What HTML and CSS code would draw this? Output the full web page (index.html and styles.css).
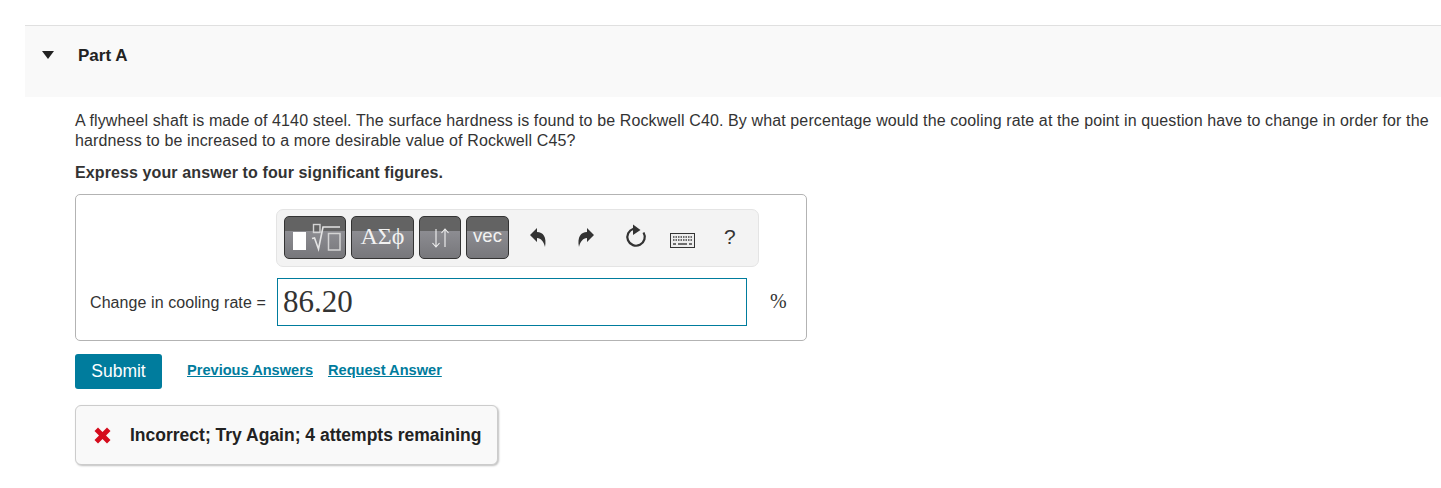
FILE: index.html
```html
<!DOCTYPE html>
<html lang="en">
<head>
<meta charset="utf-8">
<title>Part A</title>
<link rel="stylesheet" href="styles.css">
</head>
<body>
<section class="part">
  <header class="part-head">
    <span class="caret"></span>
    <h2 class="part-title">Part A</h2>
  </header>
  <div class="part-body">
    <p class="question">A flywheel shaft is made of 4140 steel. The surface hardness is found to be Rockwell C40. By what percentage would the cooling rate at the point in question have to change in order for the hardness to be increased to a more desirable value of Rockwell C45?</p>
    <p class="instruction">Express your answer to four significant figures.</p>
    <div class="answer-box">
      <div class="toolbar">
        <div class="tool tool-template">
          <svg class="tool-svg" width="62" height="43" viewBox="0 0 62 43">
            <rect x="9" y="16" width="13" height="18" fill="#fff"/>
            <rect x="29.500" y="8.500" width="6.500" height="8" fill="none" stroke="#d4d4d4" stroke-width="1.400"/>
            <path d="M28 22.500l2.500-.5 4 11 4.500-22h17" fill="none" stroke="#e4e4e4" stroke-width="1.600"/>
            <rect x="44.500" y="17.500" width="11.500" height="16.500" fill="none" stroke="#d4d4d4" stroke-width="1.500"/>
          </svg>
        </div>
        <div class="tool tool-greek">ΑΣϕ</div>
        <div class="tool tool-arrows">
          <svg class="tool-svg" width="42" height="43" viewBox="0 0 42 43">
            <path d="M17 13v18m-3.500-4l3.500 4 3.500-4M26 31V13m-3.500 4l3.500-4 3.500 4" fill="none" stroke="#f2f2f2" stroke-width="1.100"/>
          </svg>
        </div>
        <div class="tool tool-vec">vec</div>
        <div class="actions">
          <svg class="action action-undo" width="18" height="20" viewBox="0 0 18 20"><path d="M1 7l7-7v4c6 0 10 5 8 15-1-5-4-9-8-9v4z" fill="#333"/></svg>
          <svg class="action action-redo" width="18" height="20" viewBox="0 0 18 20"><path d="M17 7l-7-7v4C4 4 0 9 2 19c1-5 4-9 8-9v4z" fill="#333"/></svg>
          <svg class="action action-reset" width="22" height="24" viewBox="0 0 22 24"><path d="M8.500 4.700a8.700 8.700 0 1 0 10 3.800" fill="none" stroke="#333" stroke-width="2.200"/><path d="M8 .5L15.500 6 8 11z" fill="#333"/></svg>
          <svg class="action action-keys" width="25" height="15" viewBox="0 0 25 15"><rect x=".5" y=".5" width="24" height="14" fill="#eee" stroke="#333"/><path d="M3 4h19M3 7h19" stroke="#444" stroke-width="1.500" stroke-dasharray="1.500 1"/><path d="M3 11h3M8 11h9M19 11h3" stroke="#444" stroke-width="1.500"/></svg>
          <span class="action action-help">?</span>
        </div>
      </div>
      <div class="answer-row">
        <label class="answer-label">Change in cooling rate =</label>
        <div class="answer-input">86.20</div>
        <span class="answer-unit">%</span>
      </div>
    </div>
    <div class="submit-row">
      <button class="submit" type="button">Submit</button>
      <a class="link" href="#">Previous Answers</a>
      <a class="link" href="#">Request Answer</a>
    </div>
    <div class="feedback">
      <svg class="cross" width="17" height="17" viewBox="0 0 17 17"><path d="M4 .5l4.500 4.500L13 .5 16.500 4 12 8.500l4.500 4.500-3.500 3.500L8.500 12 4 16.500.5 13 5 8.500.5 4z" fill="#d50c1d"/></svg>
      <span class="feedback-text">Incorrect; Try Again; 4 attempts remaining</span>
    </div>
  </div>
</section>
</body>
</html>
```
FILE: styles.css
```css
* { box-sizing: border-box; }
html, body { margin: 0; padding: 0; background: #fff; }
body {
  font-family: "Liberation Sans", Arial, sans-serif;
  font-size: 16px;
  color: #333;
  height: 488px;
  overflow: hidden;
}
.part { padding: 25px 0 0 25px; }
.part-head {
  display: flex;
  align-items: center;
  height: 72px;
  background: #f9f9f9;
  border-top: 1px solid #e0e0e0;
  padding: 0 0 12px 17px;
}
.caret {
  width: 0;
  height: 0;
  border-left: 6.500px solid transparent;
  border-right: 6.500px solid transparent;
  border-top: 8px solid #222;
  margin: 0 24px 2px 0;
}
.part-title { margin: 0; font-size: 17px; font-weight: 700; color: #222; }
.part-body { padding: 14px 0 0 50px; }
.question { margin: 0; line-height: 20px; color: #333; width: 1366px; letter-spacing: .115px; }
.instruction { margin: 12px 0 0; line-height: 20px; font-weight: 700; color: #333; letter-spacing: .11px; }
.answer-box {
  width: 732px;
  height: 147px;
  margin-top: 11px;
  border: 1px solid #b3b3b3;
  border-radius: 5px;
  padding: 14px 0 0 14px;
}
.toolbar {
  display: flex;
  align-items: flex-start;
  gap: 5px;
  width: 483px;
  height: 58px;
  margin-left: 186px;
  padding: 6px 0 0 7px;
  background: #f3f3f3;
  border: 1px solid #e4e4e4;
  border-radius: 7px;
}
.tool {
  position: relative;
  height: 43px;
  display: flex;
  align-items: center;
  justify-content: center;
  border: 1px solid #333;
  border-radius: 5px;
  background: linear-gradient(#636363 0, #636363 33%, #8d8d92 33%, #77777b 100%);
  color: #f2f2f2;
}
.tool-svg { position: absolute; left: -1px; top: -1px; }
.tool-template { width: 62px; }
.tool-greek {
  width: 63px;
  font-family: "Liberation Serif", "DejaVu Serif", serif;
  font-size: 24px;
  padding-bottom: 2px;
}
.tool-arrows { width: 42px; }
.tool-vec { width: 43px; font-size: 18.500px; padding-bottom: 4px; }
.actions { position: relative; flex: 1; height: 100%; }
.action { position: absolute; }
.action-undo { left: 15px; top: 12px; }
.action-redo { left: 63px; top: 12px; }
.action-reset { left: 111px; top: 8px; }
.action-keys { left: 156px; top: 17px; }
.action-help { left: 210px; top: 9px; font-size: 21px; color: #333; }
.answer-row {
  display: flex;
  align-items: center;
  height: 48px;
  margin-top: 11px;
}
.answer-label { width: 187px; font-size: 16px; color: #333; letter-spacing: .08px; padding-top: 2px; }
.answer-input {
  width: 470px;
  height: 48px;
  border: 1px solid #007c9d;
  padding: 0 5px;
  font-family: "Liberation Serif", "Times New Roman", serif;
  font-size: 31px;
  line-height: 46px;
  color: #333;
}
.answer-unit {
  margin: 0 0 2px 23px;
  font-family: "Liberation Serif", "Times New Roman", serif;
  font-size: 20px;
  color: #333;
}
.submit-row { display: flex; align-items: center; margin-top: 13px; height: 35px; }
.submit {
  width: 87px;
  height: 35px;
  margin-right: 25px;
  border: 0;
  border-radius: 3px;
  background: #007c9d;
  color: #fff;
  font-family: inherit;
  font-size: 17.500px;
  padding: 0;
}
.link {
  margin-right: 15px;
  padding-bottom: 3px;
  color: #007c9d;
  font-size: 14.600px;
  font-weight: 700;
  text-decoration: underline;
}
.feedback {
  display: flex;
  align-items: center;
  width: 423px;
  height: 60px;
  margin-top: 16px;
  padding-left: 18px;
  background: #f9f9f9;
  border: 1px solid #ccc;
  border-radius: 6px;
  box-shadow: 1px 1px 2px rgba(0, 0, 0, .25);
}
.cross { margin-right: 19px; }
.feedback-text { font-size: 17.500px; font-weight: 700; color: #222; }
```
